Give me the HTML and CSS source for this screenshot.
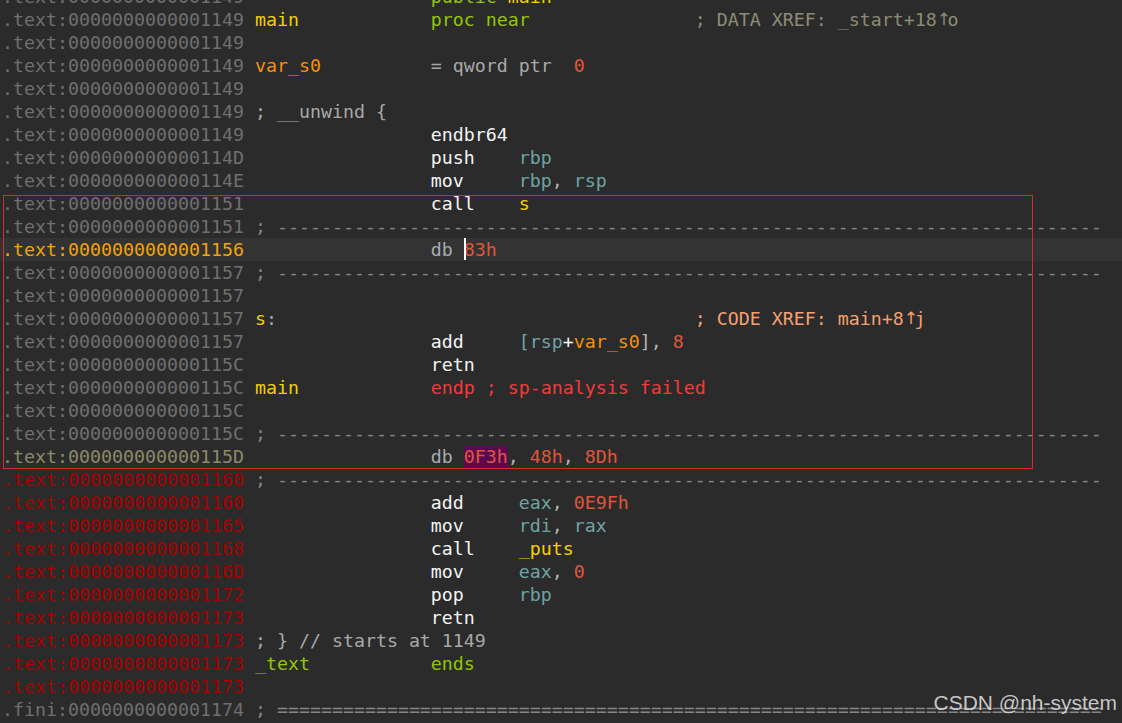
FILE: index.html
```html
<!DOCTYPE html>
<html>
<head>
<meta charset="utf-8">
<link rel="stylesheet" href="styles.css">
</head>
<body>
<div class="view">
  <div class="ln"><span class="ad a">.text:0000000000001149</span><span class="lb"></span><span class="mn kw">public <span class="lbl">main</span></span></div>
  <div class="ln"><span class="ad a">.text:0000000000001149</span><span class="lb lbl">main</span><span class="mn2 kw">proc near</span><span class="cm">; DATA XREF: _start+18<span class="arr">↑</span>o</span></div>
  <div class="ln"><span class="ad a">.text:0000000000001149</span></div>
  <div class="ln"><span class="ad a">.text:0000000000001149</span><span class="lb var">var_s0</span><span class="g">= qword ptr  <span class="num">0</span></span></div>
  <div class="ln"><span class="ad a">.text:0000000000001149</span></div>
  <div class="ln"><span class="ad a">.text:0000000000001149</span><span class="g">; __unwind {</span></div>
  <div class="ln"><span class="ad a">.text:0000000000001149</span><span class="lb"></span><span class="mn ins">endbr64</span></div>
  <div class="ln"><span class="ad a">.text:000000000000114D</span><span class="lb"></span><span class="mn ins">push</span><span class="reg">rbp</span></div>
  <div class="ln"><span class="ad a">.text:000000000000114E</span><span class="lb"></span><span class="mn ins">mov</span><span class="reg">rbp<span class="p">,</span> rsp</span></div>
  <div class="ln"><span class="ad a">.text:0000000000001151</span><span class="lb"></span><span class="mn ins">call</span><span class="lbl">s</span></div>
  <div class="ln"><span class="ad a">.text:0000000000001151</span><span class="sep">; ---------------------------------------------------------------------------</span></div>
  <div class="ln cur"><span class="ad ah">.text:0000000000001156</span><span class="lb"></span><span class="db">db <span class="num cursor">83h</span></span></div>
  <div class="ln"><span class="ad a">.text:0000000000001157</span><span class="sep">; ---------------------------------------------------------------------------</span></div>
  <div class="ln"><span class="ad a">.text:0000000000001157</span></div>
  <div class="ln"><span class="ad a">.text:0000000000001157</span><span class="lb lbl">s<span class="g">:</span></span><span class="mn"></span><span class="op"></span><span class="cx">; CODE XREF: main+8<span class="arr">↑</span>j</span></div>
  <div class="ln"><span class="ad a">.text:0000000000001157</span><span class="lb"></span><span class="mn ins">add</span><span class="reg">[rsp<span class="ins">+</span><span class="var">var_s0</span><span class="p">],</span> <span class="num">8</span></span></div>
  <div class="ln"><span class="ad a">.text:000000000000115C</span><span class="lb"></span><span class="mn ins">retn</span></div>
  <div class="ln"><span class="ad a">.text:000000000000115C</span><span class="lb lbl">main</span><span class="err">endp ; sp-analysis failed</span></div>
  <div class="ln"><span class="ad a">.text:000000000000115C</span></div>
  <div class="ln"><span class="ad a">.text:000000000000115C</span><span class="sep">; ---------------------------------------------------------------------------</span></div>
  <div class="ln"><span class="ad ao">.text:000000000000115D</span><span class="lb"></span><span class="db">db <span class="num hl">0F3h</span><span class="p">,</span> <span class="num">48h</span><span class="p">,</span> <span class="num">8Dh</span></span></div>
  <div class="ln"><span class="ad ar">.text:0000000000001160</span><span class="sep">; ---------------------------------------------------------------------------</span></div>
  <div class="ln"><span class="ad ar">.text:0000000000001160</span><span class="lb"></span><span class="mn ins">add</span><span class="reg">eax<span class="p">,</span> <span class="num">0E9Fh</span></span></div>
  <div class="ln"><span class="ad ar">.text:0000000000001165</span><span class="lb"></span><span class="mn ins">mov</span><span class="reg">rdi<span class="p">,</span> rax</span></div>
  <div class="ln"><span class="ad ar">.text:0000000000001168</span><span class="lb"></span><span class="mn ins">call</span><span class="lbl">_puts</span></div>
  <div class="ln"><span class="ad ar">.text:000000000000116D</span><span class="lb"></span><span class="mn ins">mov</span><span class="reg">eax<span class="p">,</span> <span class="num">0</span></span></div>
  <div class="ln"><span class="ad ar">.text:0000000000001172</span><span class="lb"></span><span class="mn ins">pop</span><span class="reg">rbp</span></div>
  <div class="ln"><span class="ad ar">.text:0000000000001173</span><span class="lb"></span><span class="mn ins">retn</span></div>
  <div class="ln"><span class="ad ar">.text:0000000000001173</span><span class="g">; } // starts at 1149</span></div>
  <div class="ln"><span class="ad ar">.text:0000000000001173</span><span class="lb kw">_text</span><span class="mn kw">ends</span></div>
  <div class="ln"><span class="ad ar">.text:0000000000001173</span></div>
  <div class="ln"><span class="ad a">.fini:0000000000001174</span><span class="sep">; ===========================================================================</span></div>
</div>
<div class="sel"></div>
<div class="wm">CSDN @nh-system</div>
</body>
</html>
```

FILE: styles.css
```css
html, body {
  margin: 0;
  padding: 0;
}
body {
  background: #2b2b2b;
  width: 1122px;
  height: 723px;
  overflow: hidden;
  position: relative;
  font-family: "DejaVu Sans Mono", "Liberation Mono", monospace;
  font-size: 18.27px;
}
.view {
  margin-top: -15px;
  padding-left: 2px;
}
.ln {
  display: flex;
  height: 23px;
  line-height: 23px;
  white-space: pre;
  color: #a8a8a8;
  margin-left: -2px;
  padding-left: 2px;
}
.ln.cur {
  background: #333333;
}
.ad { flex: none; width: 23ch; }
.lb { flex: none; width: 16ch; }
.mn { flex: none; width: 8ch; }
.mn2 { flex: none; width: 24ch; }
.op { flex: none; width: 16ch; }

.a { color: #6f6f6f; }
.ah { color: #f0a30a; }
.ao { color: #8b8a68; }
.ar { color: #a80000; }
.lbl { color: #f2d100; }
.var { color: #f5900a; }
.kw { color: #93c600; }
.ins { color: #f4f4f4; }
.db { color: #a4acb4; }
.reg { color: #6fa3a3; }
.num { color: #e0553a; }
.p { color: #b4b4b4; }
.cm { color: #8d8b75; }
.cx { color: #f5a070; }
.err { color: #f23a3a; }
.g { color: #a8a8a8; }
.sep { color: #858585; }
.hl { background: #5c0a50; }

.arr {
  display: inline-block;
  width: 1ch;
  text-align: center;
  font-family: "DejaVu Sans", sans-serif;
  font-size: 17px;
  vertical-align: top;
}

.cursor { position: relative; }
.cursor::before {
  content: "";
  position: absolute;
  left: 0;
  top: -1px;
  width: 2px;
  height: 22px;
  background: #ffffff;
}

.sel {
  position: absolute;
  left: 3px;
  top: 195px;
  width: 1028px;
  height: 272px;
  border: 1px solid #d42a2a;
  pointer-events: none;
}

.wm {
  position: absolute;
  right: 5px;
  top: 691px;
  font-family: "Liberation Sans", Arial, sans-serif;
  font-size: 21px;
  line-height: 24px;
  color: rgba(222, 222, 222, 0.88);
}
```
